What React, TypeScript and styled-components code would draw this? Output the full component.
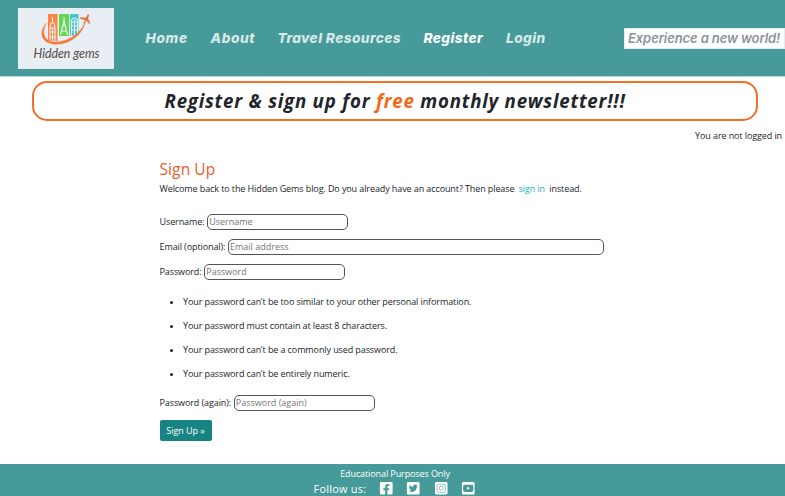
import React from "react";
import styled, { createGlobalStyle } from "styled-components";
import { FaFacebookSquare, FaTwitterSquare, FaYoutubeSquare } from "react-icons/fa";

const GlobalStyle = createGlobalStyle`
  *, *::before, *::after { box-sizing: border-box; }
  body {
    margin: 0;
    background: #fff;
    color: #212529;
    font: 9px/14px "Open Sans", sans-serif;
    letter-spacing: -0.1px;
    overflow: hidden;
  }
`;

const Page = styled.div`
  display: flex;
  flex-direction: column;
  height: 496px;
`;

const Header = styled.header`
  display: flex;
  align-items: center;
  flex: none;
  height: 77px;
  padding-left: 18px;
  background: #469a99;
  border-bottom: 1px solid #b9d8d7;
`;

const Logo = styled.svg`
  flex: none;
  width: 96px;
  height: 61px;
`;

const Nav = styled.nav`
  display: flex;
  gap: 22px;
  margin-left: 31.5px;
`;

const NavLink = styled.a<{ $width: number; $spacing: number; $active?: boolean }>`
  width: ${(p) => p.$width}px;
  white-space: nowrap;
  font: italic 800 13.7px/20px Inter, sans-serif;
  letter-spacing: ${(p) => p.$spacing}px;
  color: ${(p) => (p.$active ? "#fafdfd" : "#d6e8e7")};
`;

const Tagline = styled.div`
  flex: none;
  width: 161px;
  height: 21px;
  margin-left: auto;
  padding-left: 3px;
  background: #fff;
  border: 1px solid #e3eeee;
  color: #8b939b;
  font: italic 600 13px/18px Inter, sans-serif;
  letter-spacing: -0.1px;
  white-space: nowrap;
`;

const Banner = styled.h1`
  flex: none;
  width: 726px;
  height: 40px;
  margin: 4px 0 0 32px;
  border: 2px solid #f27023;
  border-radius: 15px;
  text-align: center;
  font: italic 700 18.7px/36px "Open Sans", sans-serif;
  letter-spacing: 0.77px;
`;

const Highlight = styled.span`
  color: #f26716;
`;

const LoginStatus = styled.p`
  margin: 8px 3px 0 0;
  text-align: right;
`;

const Main = styled.main`
  flex: 1;
  padding: 16px 0 0 159.5px;
`;

const Title = styled.h2`
  margin: 0;
  color: #ed5b2d;
  font-weight: 400;
  font-size: 15.5px;
  line-height: 20px;
  letter-spacing: 0.1px;
`;

const Intro = styled.p`
  margin: 3px 0 17px;
`;

const SignInLink = styled.a`
  margin: 0 2px;
  color: #2aafb5;
`;

const Field = styled.label`
  display: flex;
  align-items: center;
  gap: 2.7px;
  height: 17px;
  margin-bottom: 8px;
  white-space: nowrap;
`;

const Input = styled.input<{ $wide?: boolean }>`
  width: ${(p) => (p.$wide ? 376 : 141)}px;
  height: 16px;
  padding: 0 1px;
  border: 1px solid #555;
  border-radius: 5px;
  font: inherit;
  letter-spacing: 0;
  &::placeholder { color: #757575; opacity: 1; }
`;

const Rules = styled.ul`
  display: flex;
  flex-direction: column;
  gap: 10px;
  margin: 15px 0 13px;
  padding-left: 23.5px;
`;

const RuleItem = styled.li`
  &::marker { letter-spacing: 1.8px; }
`;

const SubmitButton = styled.button`
  display: block;
  width: 52px;
  height: 21px;
  margin-top: 9px;
  padding: 0;
  border: 0;
  border-radius: 2px;
  background: #178382;
  color: #fff;
  font: 500 9px/20px "Open Sans", sans-serif;
  letter-spacing: -0.05px;
`;

const Footer = styled.footer`
  flex: none;
  height: 32px;
  padding-top: 3px;
  background: #469a99;
  color: #fff;
  overflow: hidden;
`;

const Notice = styled.p`
  margin: 0;
  padding-left: 5px;
  text-align: center;
  font-weight: 500;
  letter-spacing: -0.1px;
`;

const Social = styled.div`
  display: flex;
  align-items: center;
  height: 15px;
  padding-left: 313.5px;
  font-size: 11px;
  font-weight: 500;
  letter-spacing: 0.2px;
`;

const SocialIcons = styled.div`
  display: flex;
  gap: 13px;
  margin-left: 12.5px;
  svg { width: 14.5px; height: 14.5px; display: block; }
`;

const navItems = [
  { label: "Home", width: 43, spacing: 0.7 },
  { label: "About", width: 45, spacing: 0.6 },
  { label: "Travel Resources", width: 124, spacing: 0.4 },
  { label: "Register", width: 60.5, spacing: 0.4, active: true },
  { label: "Login", width: 40, spacing: 0.4 },
];

const passwordRules = [
  "Your password can’t be too similar to your other personal information.",
  "Your password must contain at least 8 characters.",
  "Your password can’t be a commonly used password.",
  "Your password can’t be entirely numeric.",
];

const HiddenGemsLogo = () => (
  <Logo viewBox="0 0 96 61" role="img" aria-label="Hidden gems">
    <rect width="96" height="61" fill="#e9edf4" />
    <path fill="#fa8442" d="M30 6h9.5v27H30z" />
    <path fill="#62d84b" d="M41 6h10v22H41z" />
    <path fill="#47c8c9" d="M52 6h8.5v22H52z" />
    <g stroke="#e9edf4" fill="none" strokeWidth="1.1">
      <path d="M34.5 9v5M33 15h3l1 5h-5zM32 20v14M34.5 20v14M37 20v14M31 24h7M31 29h7" />
      <path d="M46 9v4l-3.5 14M46 13l3.5 14M44 18h4M43 23h6M45 13h2" />
      <path d="M53.5 12q3-4 6 0v16M53.5 12v16M54 14h5M54 18h5M54 22h5M56.5 12v16" />
    </g>
    <path
      d="M28.5 15C21 23 22 34 35 36C50 38 65 27 67 14c-4 11-16 20-30 20C26 34 23 24 28.5 15Z"
      fill="#f4783a"
      stroke="#f4783a"
      strokeWidth=".4"
    />
    <path d="m65.5 16 1.5-4-5.5-1.5.8-1.2 5.6.5 2-3.6 1.2.6-1 3.8 2 4.6-1 .6-3-3.5-1.6 4z" fill="#e96d34" />
    <text
      x="15.5"
      y="50"
      fill="#514b43"
      fontFamily="Lato, sans-serif"
      fontStyle="italic"
      fontSize="12.5"
      letterSpacing="0"
      textLength="66"
      lengthAdjust="spacingAndGlyphs"
    >
      Hidden gems
    </text>
  </Logo>
);

const InstagramSquare = () => (
  <svg viewBox="0 0 15 15" fill="none" aria-label="Instagram">
    <rect x="1" y="1" width="13" height="13" rx="1.5" fill="#fff" />
    <g stroke="#469a99" strokeWidth=".6">
      <rect x="3.2" y="3.2" width="8.6" height="8.6" rx="2.2" />
      <circle cx="7.5" cy="7.5" r="2.1" />
    </g>
    <circle cx="10.1" cy="4.9" r=".5" fill="#469a99" />
  </svg>
);

export default function App() {
  return (
    <Page>
      <GlobalStyle />
      <Header>
        <HiddenGemsLogo />
        <Nav>
          {navItems.map((item) => (
            <NavLink key={item.label} $width={item.width} $spacing={item.spacing} $active={item.active}>
              {item.label}
            </NavLink>
          ))}
        </Nav>
        <Tagline>Experience a new world!</Tagline>
      </Header>
      <Banner>
        Register &amp; sign up for <Highlight>free</Highlight> monthly newsletter!!!
      </Banner>
      <LoginStatus>You are not logged in</LoginStatus>
      <Main>
        <Title>Sign Up</Title>
        <Intro>
          Welcome back to the Hidden Gems blog. Do you already have an account? Then please{" "}
          <SignInLink>sign in</SignInLink> instead.
        </Intro>
        <Field>Username: <Input placeholder="Username" /></Field>
        <Field>Email (optional): <Input type="email" placeholder="Email address" $wide /></Field>
        <Field>Password: <Input type="password" placeholder="Password" /></Field>
        <Rules>
          {passwordRules.map((rule) => (
            <RuleItem key={rule}>{rule}</RuleItem>
          ))}
        </Rules>
        <Field>Password (again): <Input type="password" placeholder="Password (again)" /></Field>
        <SubmitButton>Sign Up »</SubmitButton>
      </Main>
      <Footer>
        <Notice>Educational Purposes Only</Notice>
        <Social>
          Follow us:
          <SocialIcons>
            <FaFacebookSquare />
            <FaTwitterSquare />
            <InstagramSquare />
            <FaYoutubeSquare />
          </SocialIcons>
        </Social>
      </Footer>
    </Page>
  );
}
